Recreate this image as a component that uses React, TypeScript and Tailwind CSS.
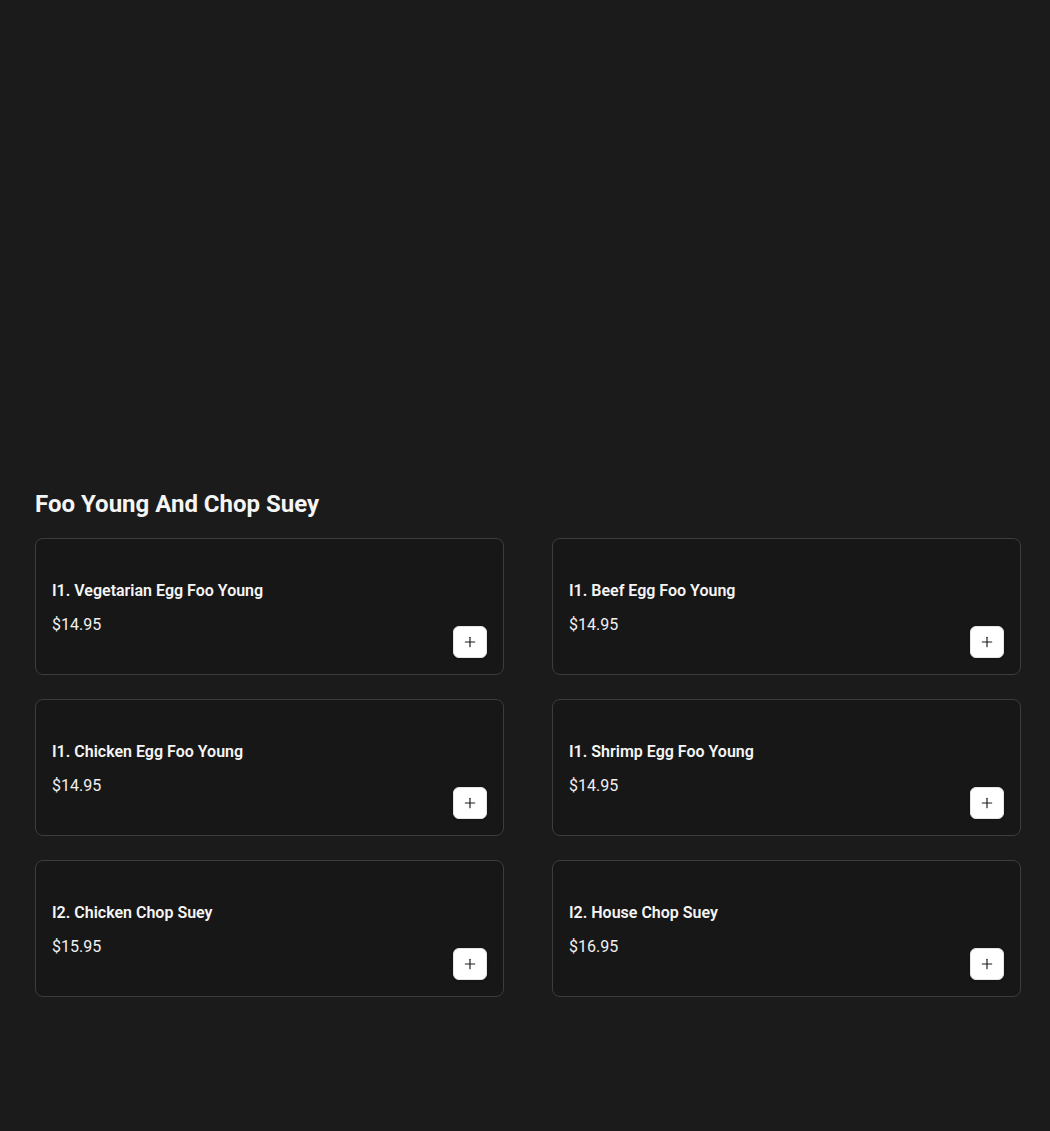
import { Plus } from "lucide-react";

const ITEMS = [
  { name: "I1. Vegetarian Egg Foo Young", price: "$14.95" },
  { name: "I1. Beef Egg Foo Young", price: "$14.95" },
  { name: "I1. Chicken Egg Foo Young", price: "$14.95" },
  { name: "I1. Shrimp Egg Foo Young", price: "$14.95" },
  { name: "I2. Chicken Chop Suey", price: "$15.95" },
  { name: "I2. House Chop Suey", price: "$16.95" },
];

function MenuCard({ name, price }: { name: string; price: string }) {
  return (
    <div className="flex h-[137px] items-end justify-between rounded-lg border border-[#3d3d3d] bg-[#171717] p-4">
      <div className="flex h-full flex-col pt-[24px]">
        <h3 className="text-base leading-6 font-semibold text-[#f5f5f5]">{name}</h3>
        <p className="mt-[10px] text-base leading-6 text-[#f0f0f0]">{price}</p>
      </div>
      <button className="flex h-8 w-[34px] items-center justify-center rounded-md border border-[#e5e5e5] bg-white text-[#1a1a1a] shadow-sm">
        <Plus size={16} strokeWidth={1.75} />
      </button>
    </div>
  );
}

export default function App() {
  return (
    <main
      className="min-h-screen w-full bg-[#1b1b1b]"
      style={{ fontFamily: "Roboto, 'Liberation Sans', sans-serif" }}
    >
      {/* empty hero area */}
      <div className="h-[488px]" />

      <section className="w-[986px] pl-[35px] box-content pb-[134px]">
        <h2 className="mb-[18px] text-2xl leading-8 font-bold text-[#f5f5f5]">
          Foo Young And Chop Suey
        </h2>
        <div className="grid grid-cols-2 gap-x-12 gap-y-6">
          {ITEMS.map((item) => (
            <MenuCard key={item.name} {...item} />
          ))}
        </div>
      </section>
    </main>
  );
}
